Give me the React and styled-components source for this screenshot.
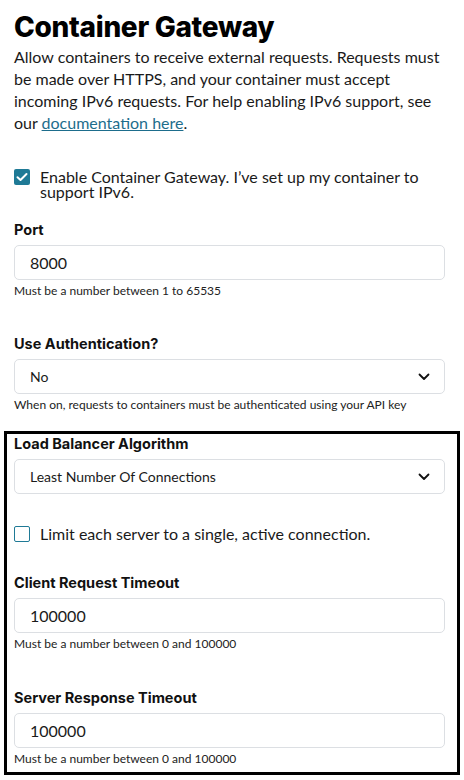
import React from "react";
import styled, { createGlobalStyle } from "styled-components";

const GlobalStyle = createGlobalStyle`
  body {
    margin: 0;
    background: #fff;
    font-family: "Lato", "Noto Sans", sans-serif;
    color: #1a1a1a;
  }
`

const Page = styled.div`
  width: 464px;
  padding: 8px 0 0;
  box-sizing: border-box;
`
const Intro = styled.div`
  padding: 0 19px 0 14px;
`
const Title = styled.h1`
  margin: 0;
  font-family: "Inter", sans-serif;
  font-size: 28px;
  font-weight: 800;
  line-height: 38px;
  color: #000;
  letter-spacing: -0.3px;
`
const Lead = styled.p`
  margin: 0;
  font-size: 16px;
  line-height: 22px;
  color: #1a1a1a;
`
const Link = styled.a`
  color: #1d6d8c;
  text-decoration: underline;
`
const CheckRow = styled.label`
  display: flex;
  align-items: flex-start;
  gap: 10px;
  margin-top: ${p => p.$top || 0}px;
  font-size: 16px;
  line-height: 15px;
  color: #1a1a1a;
`
const Box = styled.span`
  flex: none;
  width: 16px;
  height: 16px;
  box-sizing: border-box;
  border-radius: 2px;
  display: flex;
  align-items: center;
  justify-content: center;
  background: ${p => (p.$checked ? "#1f7a96" : "#fff")};
  border: ${p => (p.$checked ? "none" : "1.5px solid #1f7a96")};
`
const Field = styled.div`
  margin-top: ${p => p.$top || 0}px;
`
const Label = styled.div`
  font-family: "Inter", sans-serif;
  font-weight: 700;
  font-size: 14.5px;
  line-height: 20px;
  color: #111;
  margin-bottom: 5px;
`
const Input = styled.div`
  height: 35px;
  box-sizing: border-box;
  border: 1px solid #dcdfe3;
  border-radius: 5px;
  display: flex;
  align-items: center;
  justify-content: space-between;
  padding: 0 14px 0 15px;
  font-size: ${p => (p.$small ? 14 : 16)}px;
  color: #1a1a1a;
`
const Hint = styled.div`
  font-size: 12px;
  line-height: 14px;
  margin-top: 4px;
  color: #222;
`
const Outlined = styled.div`
  margin: 19px 4px 0;
  border: 3px solid #000;
  padding: 0 12px 6px 7px;
`

const Check = () => (
  <svg width="12" height="10" viewBox="0 0 12 10">
    <path d="M1.5 5.2 4.5 8 10.5 2" fill="none" stroke="#fff" strokeWidth="2" strokeLinecap="round" strokeLinejoin="round" />
  </svg>
)
const Chevron = () => (
  <svg width="12" height="8" viewBox="0 0 12 8">
    <path d="M1.5 1.5 6 6 10.5 1.5" fill="none" stroke="#111" strokeWidth="1.8" strokeLinecap="round" strokeLinejoin="round" />
  </svg>
)

export default function App() {
  return (
    <>
      <GlobalStyle />
      <Page>
        <Intro>
          <Title>Container Gateway</Title>
          <Lead>
            Allow containers to receive external requests. Requests must be made over HTTPS, and your container must accept incoming IPv6 requests. For help enabling IPv6 support, see our <Link href="#">documentation here</Link>.
          </Lead>
          <CheckRow $top={35}>
            <Box $checked><Check /></Box>
            <span>Enable Container Gateway. I’ve set up my container to support IPv6.</span>
          </CheckRow>
          <Field $top={21}>
            <Label>Port</Label>
            <Input>8000</Input>
            <Hint>Must be a number between 1 to 65535</Hint>
          </Field>
          <Field $top={36}>
            <Label>Use Authentication?</Label>
            <Input $small>No<Chevron /></Input>
            <Hint>When on, requests to containers must be authenticated using your API key</Hint>
          </Field>
        </Intro>
        <Outlined>
          <Field>
            <Label>Load Balancer Algorithm</Label>
            <Input $small>Least Number Of Connections<Chevron /></Input>
          </Field>
          <CheckRow $top={32}>
            <Box />
            <span>Limit each server to a single, active connection.</span>
          </CheckRow>
          <Field $top={31}>
            <Label>Client Request Timeout</Label>
            <Input>100000</Input>
            <Hint>Must be a number between 0 and 100000</Hint>
          </Field>
          <Field $top={37}>
            <Label>Server Response Timeout</Label>
            <Input>100000</Input>
            <Hint>Must be a number between 0 and 100000</Hint>
          </Field>
        </Outlined>
      </Page>
    </>
  )
}
